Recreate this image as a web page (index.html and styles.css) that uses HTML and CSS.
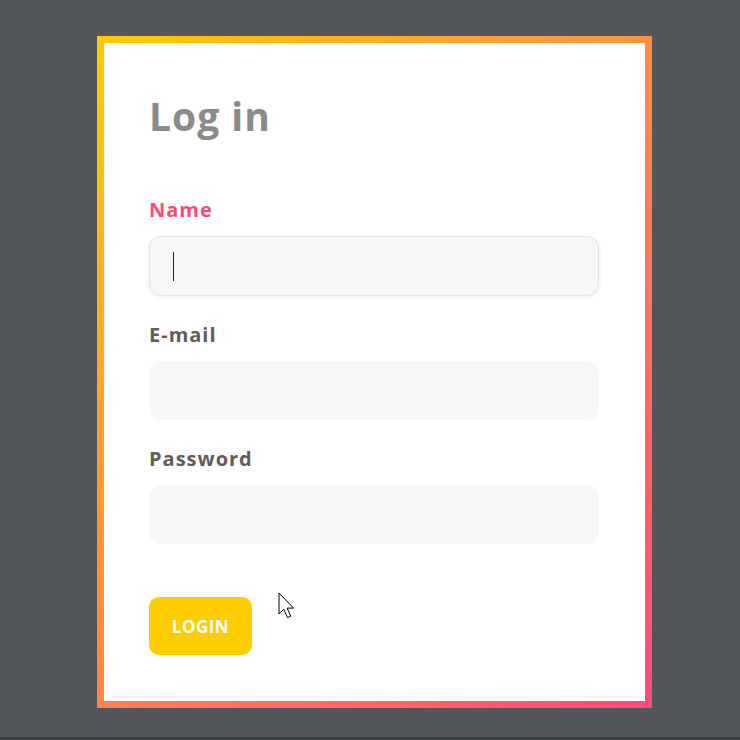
FILE: index.html
```html
<!DOCTYPE html>
<html>
<head>
<meta charset="utf-8">
<link rel="stylesheet" href="styles.css">
</head>
<body>
<div class="stage">
  <div class="frame">
    <div class="card">
      <h1 class="title">Log in</h1>
      <div class="field">
        <label class="label label-active">Name</label>
        <div class="input input-focus"><span class="caret"></span></div>
      </div>
      <div class="field">
        <label class="label">E-mail</label>
        <div class="input"></div>
      </div>
      <div class="field">
        <label class="label">Password</label>
        <div class="input"></div>
      </div>
      <div class="actions">
        <button class="btn">LOGIN</button>
        <svg class="pointer" width="21" height="29" viewBox="0 0 21 29">
          <path d="M1 1 L1 22 L5.8 17.2 L9.5 25.6 L12.7 24.2 L9.1 16.1 L15.6 16.1 Z" fill="#fff" stroke="#000" stroke-width="1" stroke-linejoin="miter"/>
        </svg>
      </div>
    </div>
  </div>
</div>
</body>
</html>
```

FILE: styles.css
```css
html {
  background: #3c3f44;
}
body {
  margin: 0;
  font-family: "Open Sans", Lato, sans-serif;
}
.stage {
  height: 737px;
  background: #53565b;
  padding: 36px 0 0 97px;
  box-sizing: border-box;
}
.frame {
  width: 555px;
  height: 672px;
  box-sizing: border-box;
  padding: 7px;
  background: linear-gradient(135deg, #ffcc00 0%, #ff8a45 50%, #ff4a7e 100%);
}
.card {
  background: #fff;
  height: 100%;
  box-sizing: border-box;
  padding: 49px 46px 0 45px;
}
.title {
  margin: 0 0 58px;
  font-size: 39px;
  line-height: 48px;
  font-weight: 700;
  letter-spacing: 1px;
  color: #8a8a8a;
}
.field {
  display: flex;
  flex-direction: column;
  margin-bottom: 27px;
}
.label {
  font-size: 20px;
  line-height: 24px;
  font-weight: 700;
  letter-spacing: 1px;
  color: #5f5c5a;
  margin-bottom: 14px;
}
.label-active {
  color: #ff4a78;
}
.input {
  height: 59px;
  border-radius: 12px;
  background: #f7f7f7;
  position: relative;
}
.input-focus {
  height: 60px;
  box-sizing: border-box;
  border: 1px solid #e4e4e4;
  box-shadow: 0 1px 4px rgba(0,0,0,0.08);
}
.caret {
  position: absolute;
  left: 23px;
  top: 15px;
  width: 1px;
  height: 29px;
  background: #222;
}
.actions {
  position: relative;
  margin-top: 53px;
}
.btn {
  display: block;
  width: 103px;
  height: 58px;
  border: 0;
  border-radius: 10px;
  background: #ffcc00;
  color: #fff;
  font-family: "Open Sans", Lato, sans-serif;
  font-weight: 700;
  font-size: 17px;
  letter-spacing: 0.5px;
  padding: 0;
}
.pointer {
  position: absolute;
  left: 129px;
  top: -5px;
}
```
